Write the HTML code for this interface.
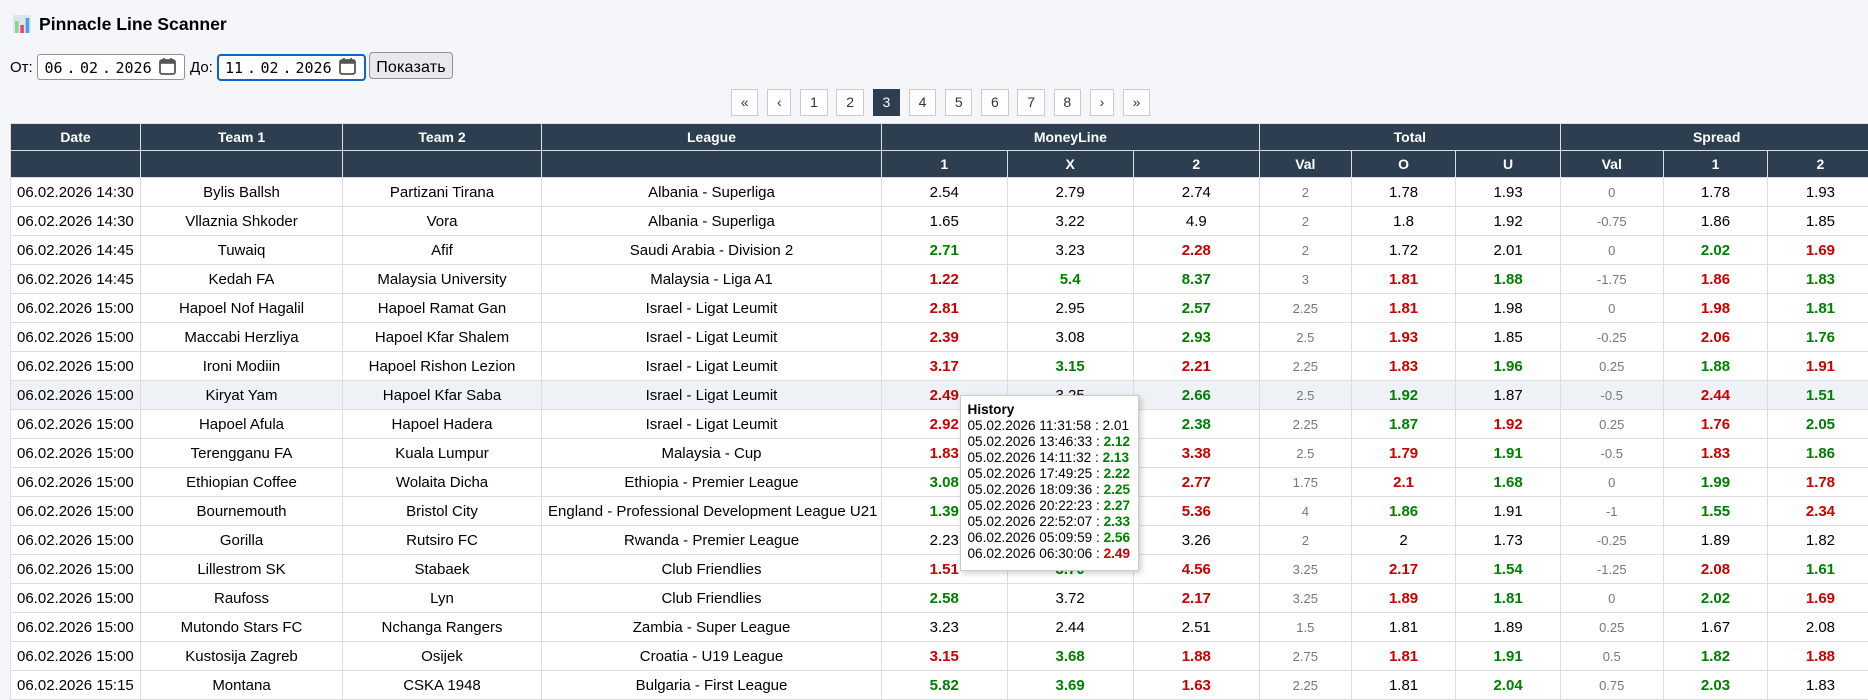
<!DOCTYPE html>
<html lang="ru"><head><meta charset="utf-8"><title>Pinnacle Line Scanner</title>
<style>
html,body{margin:0;padding:0;width:1868px;height:696px;overflow:hidden;background:#f4f6f9;font-family:"Liberation Sans","Noto Sans CJK SC",sans-serif;color:#000}
.abs{position:absolute}
h1{position:absolute;left:39px;top:13px;margin:0;font-size:17.6px;line-height:22px;font-weight:bold;white-space:nowrap}
.lbl{position:absolute;top:59px;font-size:15px;line-height:18px;color:#000}
.inp{position:absolute;top:54px;height:26px;box-sizing:border-box;background:#fff;border:1px solid #8f8f9d;border-radius:3px}
.inp.f{border:2px solid #0b63ce;border-radius:4px;top:54px;height:27px}
.m{position:absolute;top:59px;font:15px/18px "DejaVu Sans Mono","Liberation Mono",monospace;color:#000;white-space:pre}
.btn{position:absolute;left:369px;top:52px;width:84px;height:27px;box-sizing:border-box;background:#e9e9ed;border:1px solid #8f8f9d;border-radius:4px;font-size:16px;letter-spacing:.2px;line-height:30px;text-align:center;color:#000;overflow:hidden}
.pg{position:absolute;left:731px;top:89px;display:flex;gap:8.8px}
.pg span{display:block;box-sizing:border-box;height:27px;border:1px solid #ccc;background:#fff;color:#333;font-size:14px;line-height:25px;text-align:center;width:27.4px}
.pg span.n{width:24.3px}
.pg span.a{background:#2c3e50;border-color:#2c3e50;color:#fff}
table{position:absolute;left:10px;top:123px;border-collapse:collapse;table-layout:fixed;width:1863px;font-size:15px;background:#fff}
th{background:#2c3e50;color:#fff;font-size:14px;font-weight:bold;border:1px solid #ddd;padding:0 6px;text-align:center}
td{border:1px solid #ddd;padding:0 6px;text-align:center;white-space:nowrap;overflow:visible;color:#000}
thead tr{height:27px}
tbody tr{height:29px}
td:first-child{text-align:left}
td.g{color:#008000;font-weight:bold}
td.r{color:#c00;font-weight:bold}
td.v{color:#777;font-size:13px}
tr.h td{background:#eef2f6}
.tip{position:absolute;left:960px;top:395px;width:179px;height:176px;box-sizing:border-box;background:#fff;border:1px solid #ccc;box-shadow:2px 2px 6px rgba(0,0,0,.2);padding:6px 6.5px;font-size:13.6px;line-height:16px;white-space:nowrap;color:#000}
.tip b{color:#000}
.tip .g{color:#008000;font-weight:bold}
.tip .r{color:#c00;font-weight:bold}
</style></head><body>

<svg class="abs" style="left:13px;top:15px" width="18" height="18" viewBox="0 0 18 18"><rect width="18" height="18" rx="2" fill="#dfe4e6"/><rect x="2" y="6" width="3.6" height="12" fill="#86d68f"/><rect x="7.3" y="10" width="3.6" height="8" fill="#e8447e"/><rect x="12.6" y="3" width="3.6" height="15" fill="#4aa3e8"/></svg>
<h1>Pinnacle Line Scanner</h1>

<div class="lbl" style="left:10px">От:</div>
<div class="inp" style="left:37px;width:148px"></div>
<div class="m" style="left:44.5px">06</div><div class="m" style="left:66.5px">.</div><div class="m" style="left:80px">02</div><div class="m" style="left:102px">.</div><div class="m" style="left:115.5px">2026</div>
<svg class="abs" style="left:159px;top:57px" width="17" height="18" viewBox="0 0 17 18"><rect x="1" y="3" width="15" height="14" rx="2" fill="none" stroke="#555" stroke-width="1.8"/><rect x="1" y="3" width="15" height="3.8" fill="#555"/><rect x="4" y="1" width="1.8" height="3" fill="#555"/><rect x="11.2" y="1" width="1.8" height="3" fill="#555"/></svg>

<div class="lbl" style="left:190px">До:</div>
<div class="inp f" style="left:217px;width:149px"></div>
<div class="m" style="left:225px">11</div><div class="m" style="left:247px">.</div><div class="m" style="left:260.5px">02</div><div class="m" style="left:282.5px">.</div><div class="m" style="left:295.5px">2026</div>
<svg class="abs" style="left:339px;top:57px" width="17" height="18" viewBox="0 0 17 18"><rect x="1" y="3" width="15" height="14" rx="2" fill="none" stroke="#555" stroke-width="1.8"/><rect x="1" y="3" width="15" height="3.8" fill="#555"/><rect x="4" y="1" width="1.8" height="3" fill="#555"/><rect x="11.2" y="1" width="1.8" height="3" fill="#555"/></svg>
<div class="btn">Показать</div>

<div class="pg"><span>«</span><span class="n">‹</span><span>1</span><span>2</span><span class="a">3</span><span>4</span><span>5</span><span>6</span><span>7</span><span>8</span><span class="n">›</span><span>»</span></div>

<table>
<colgroup><col style="width:130px"><col style="width:202px"><col style="width:199px"><col style="width:340px"><col style="width:125.5px"><col style="width:126.3px"><col style="width:126px"><col style="width:92px"><col style="width:104.5px"><col style="width:104.5px"><col style="width:102.8px"><col style="width:104.7px"><col style="width:105.2px"></colgroup>
<thead>
<tr><th>Date</th><th>Team 1</th><th>Team 2</th><th>League</th><th colspan="3">MoneyLine</th><th colspan="3">Total</th><th colspan="3">Spread</th></tr>
<tr><th></th><th></th><th></th><th></th><th>1</th><th>X</th><th>2</th><th>Val</th><th>O</th><th>U</th><th>Val</th><th>1</th><th>2</th></tr>
</thead>
<tbody>
<tr><td>06.02.2026 14:30</td><td>Bylis Ballsh</td><td>Partizani Tirana</td><td>Albania - Superliga</td><td>2.54</td><td>2.79</td><td>2.74</td><td class="v">2</td><td>1.78</td><td>1.93</td><td class="v">0</td><td>1.78</td><td>1.93</td></tr>
<tr><td>06.02.2026 14:30</td><td>Vllaznia Shkoder</td><td>Vora</td><td>Albania - Superliga</td><td>1.65</td><td>3.22</td><td>4.9</td><td class="v">2</td><td>1.8</td><td>1.92</td><td class="v">-0.75</td><td>1.86</td><td>1.85</td></tr>
<tr><td>06.02.2026 14:45</td><td>Tuwaiq</td><td>Afif</td><td>Saudi Arabia - Division 2</td><td class="g">2.71</td><td>3.23</td><td class="r">2.28</td><td class="v">2</td><td>1.72</td><td>2.01</td><td class="v">0</td><td class="g">2.02</td><td class="r">1.69</td></tr>
<tr><td>06.02.2026 14:45</td><td>Kedah FA</td><td>Malaysia University</td><td>Malaysia - Liga A1</td><td class="r">1.22</td><td class="g">5.4</td><td class="g">8.37</td><td class="v">3</td><td class="r">1.81</td><td class="g">1.88</td><td class="v">-1.75</td><td class="r">1.86</td><td class="g">1.83</td></tr>
<tr><td>06.02.2026 15:00</td><td>Hapoel Nof Hagalil</td><td>Hapoel Ramat Gan</td><td>Israel - Ligat Leumit</td><td class="r">2.81</td><td>2.95</td><td class="g">2.57</td><td class="v">2.25</td><td class="r">1.81</td><td>1.98</td><td class="v">0</td><td class="r">1.98</td><td class="g">1.81</td></tr>
<tr><td>06.02.2026 15:00</td><td>Maccabi Herzliya</td><td>Hapoel Kfar Shalem</td><td>Israel - Ligat Leumit</td><td class="r">2.39</td><td>3.08</td><td class="g">2.93</td><td class="v">2.5</td><td class="r">1.93</td><td>1.85</td><td class="v">-0.25</td><td class="r">2.06</td><td class="g">1.76</td></tr>
<tr><td>06.02.2026 15:00</td><td>Ironi Modiin</td><td>Hapoel Rishon Lezion</td><td>Israel - Ligat Leumit</td><td class="r">3.17</td><td class="g">3.15</td><td class="r">2.21</td><td class="v">2.25</td><td class="r">1.83</td><td class="g">1.96</td><td class="v">0.25</td><td class="g">1.88</td><td class="r">1.91</td></tr>
<tr class="h"><td>06.02.2026 15:00</td><td>Kiryat Yam</td><td>Hapoel Kfar Saba</td><td>Israel - Ligat Leumit</td><td class="r">2.49</td><td>3.25</td><td class="g">2.66</td><td class="v">2.5</td><td class="g">1.92</td><td>1.87</td><td class="v">-0.5</td><td class="r">2.44</td><td class="g">1.51</td></tr>
<tr><td>06.02.2026 15:00</td><td>Hapoel Afula</td><td>Hapoel Hadera</td><td>Israel - Ligat Leumit</td><td class="r">2.92</td><td>3.1</td><td class="g">2.38</td><td class="v">2.25</td><td class="g">1.87</td><td class="r">1.92</td><td class="v">0.25</td><td class="r">1.76</td><td class="g">2.05</td></tr>
<tr><td>06.02.2026 15:00</td><td>Terengganu FA</td><td>Kuala Lumpur</td><td>Malaysia - Cup</td><td class="r">1.83</td><td>3.5</td><td class="r">3.38</td><td class="v">2.5</td><td class="r">1.79</td><td class="g">1.91</td><td class="v">-0.5</td><td class="r">1.83</td><td class="g">1.86</td></tr>
<tr><td>06.02.2026 15:00</td><td>Ethiopian Coffee</td><td>Wolaita Dicha</td><td>Ethiopia - Premier League</td><td class="g">3.08</td><td>2.9</td><td class="r">2.77</td><td class="v">1.75</td><td class="r">2.1</td><td class="g">1.68</td><td class="v">0</td><td class="g">1.99</td><td class="r">1.78</td></tr>
<tr><td>06.02.2026 15:00</td><td>Bournemouth</td><td>Bristol City</td><td>England - Professional Development League U21</td><td class="g">1.39</td><td>4.9</td><td class="r">5.36</td><td class="v">4</td><td class="g">1.86</td><td>1.91</td><td class="v">-1</td><td class="g">1.55</td><td class="r">2.34</td></tr>
<tr><td>06.02.2026 15:00</td><td>Gorilla</td><td>Rutsiro FC</td><td>Rwanda - Premier League</td><td>2.23</td><td>2.9</td><td>3.26</td><td class="v">2</td><td>2</td><td>1.73</td><td class="v">-0.25</td><td>1.89</td><td>1.82</td></tr>
<tr><td>06.02.2026 15:00</td><td>Lillestrom SK</td><td>Stabaek</td><td>Club Friendlies</td><td class="r">1.51</td><td class="g">3.70</td><td class="r">4.56</td><td class="v">3.25</td><td class="r">2.17</td><td class="g">1.54</td><td class="v">-1.25</td><td class="r">2.08</td><td class="g">1.61</td></tr>
<tr><td>06.02.2026 15:00</td><td>Raufoss</td><td>Lyn</td><td>Club Friendlies</td><td class="g">2.58</td><td>3.72</td><td class="r">2.17</td><td class="v">3.25</td><td class="r">1.89</td><td class="g">1.81</td><td class="v">0</td><td class="g">2.02</td><td class="r">1.69</td></tr>
<tr><td>06.02.2026 15:00</td><td>Mutondo Stars FC</td><td>Nchanga Rangers</td><td>Zambia - Super League</td><td>3.23</td><td>2.44</td><td>2.51</td><td class="v">1.5</td><td>1.81</td><td>1.89</td><td class="v">0.25</td><td>1.67</td><td>2.08</td></tr>
<tr><td>06.02.2026 15:00</td><td>Kustosija Zagreb</td><td>Osijek</td><td>Croatia - U19 League</td><td class="r">3.15</td><td class="g">3.68</td><td class="r">1.88</td><td class="v">2.75</td><td class="r">1.81</td><td class="g">1.91</td><td class="v">0.5</td><td class="g">1.82</td><td class="r">1.88</td></tr>
<tr><td>06.02.2026 15:15</td><td>Montana</td><td>CSKA 1948</td><td>Bulgaria - First League</td><td class="g">5.82</td><td class="g">3.69</td><td class="r">1.63</td><td class="v">2.25</td><td>1.81</td><td class="g">2.04</td><td class="v">0.75</td><td class="g">2.03</td><td>1.83</td></tr>
</tbody>
</table>

<div class="tip"><b>History</b><br>
05.02.2026 11:31:58 : 2.01<br>
05.02.2026 13:46:33 : <span class="g">2.12</span><br>
05.02.2026 14:11:32 : <span class="g">2.13</span><br>
05.02.2026 17:49:25 : <span class="g">2.22</span><br>
05.02.2026 18:09:36 : <span class="g">2.25</span><br>
05.02.2026 20:22:23 : <span class="g">2.27</span><br>
05.02.2026 22:52:07 : <span class="g">2.33</span><br>
06.02.2026 05:09:59 : <span class="g">2.56</span><br>
06.02.2026 06:30:06 : <span class="r">2.49</span></div>
</body></html>
